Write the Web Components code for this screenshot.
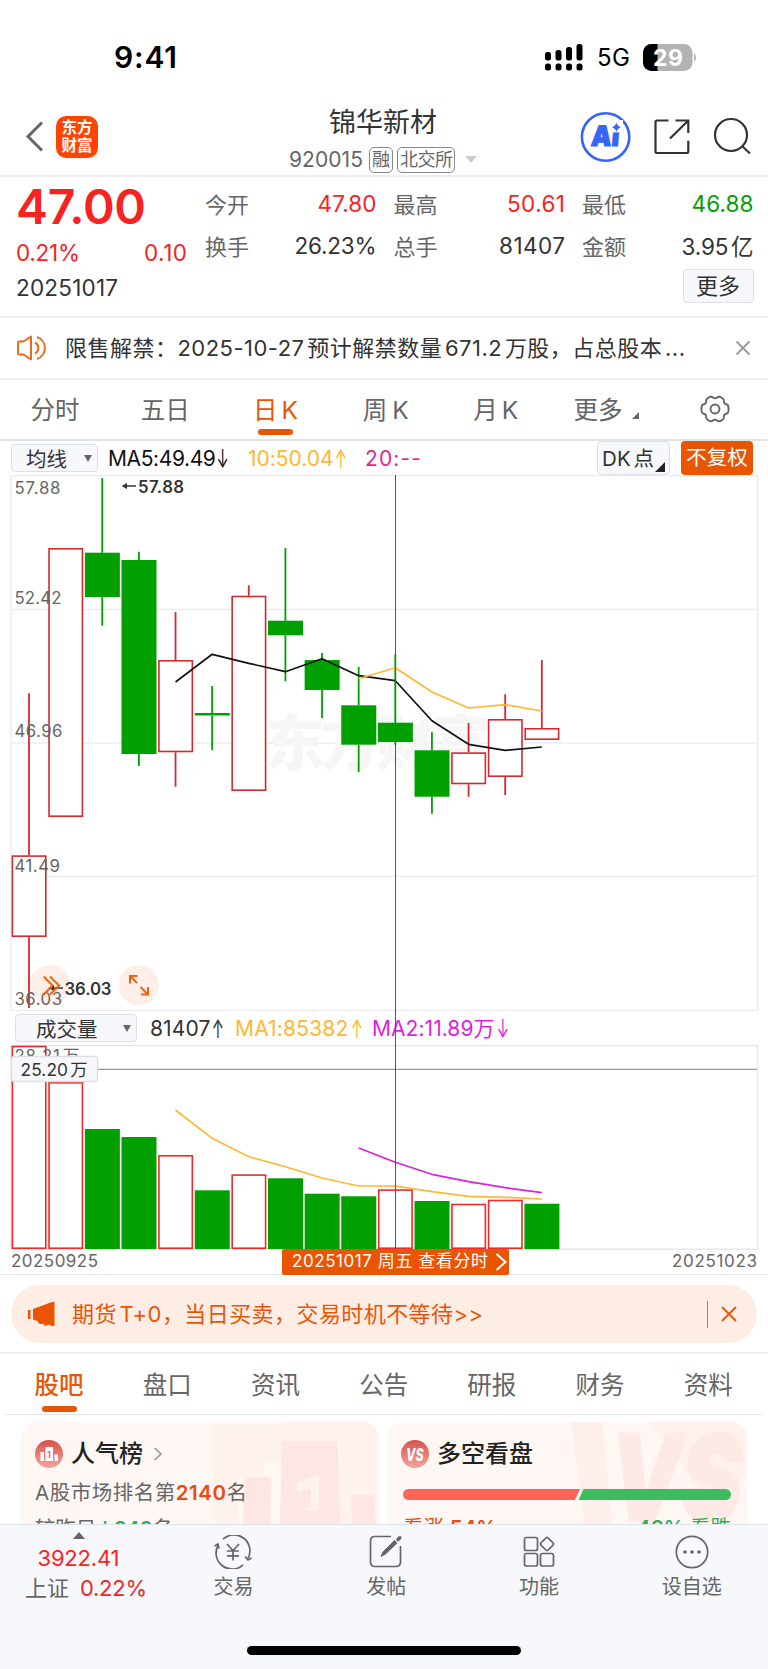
<!DOCTYPE html>
<html lang="zh-CN">
<head>
<meta charset="utf-8">
<title>锦华新材 920015</title>
<style>
  body {
    margin: 0;
    background: #fff;
    color: #333;
    font-family: Inter, "Noto Sans CJK SC", sans-serif;
    text-autospace: normal;
    width: 768px;
    height: 1669px;
    overflow: hidden;
  }
  stock-app { height: 1669px; }
</style>
</head>
<body>
<stock-app></stock-app>

<script>
const RED = '#f72323';
const GREEN = '#00a000';

// small helper so every component gets its own open shadow root
class BaseElement extends HTMLElement {
  connectedCallback() {
    if (this.shadowRoot) return;
    this.attachShadow({ mode: 'open' });
    this.shadowRoot.innerHTML = `<style>* { box-sizing: border-box; } ${this.css()}</style>${this.html()}`;
    this.ready();
  }
  css() { return ''; }
  html() { return '<slot></slot>'; }
  ready() {}
}

class StatusBar extends BaseElement {
  css() {
    return `
      :host { display: flex; align-items: center; height: 100px; padding: 14px 71px 0 114px; color: #000; }
      .time { font-size: 30px; font-weight: 600; flex: 1; }
      .net { font-size: 24px; margin: 1px 13px 0 13px; }
      svg { display: block; }
    `;
  }
  html() {
    return `
      <span class="time"><fit-text w="63">9:41</fit-text></span>
      <svg width="39" height="27" viewBox="0 0 39 27">
        <rect x="0" y="8" width="6" height="8.5" rx="2.5"/><rect x="10.5" y="6" width="6" height="10.5" rx="2.5"/>
        <rect x="21" y="3" width="6" height="13.5" rx="2.5"/><rect x="31.5" y="0" width="6" height="16.5" rx="2.5"/>
        <rect x="0" y="19.5" width="6" height="7" rx="2.5"/><rect x="10.5" y="19.5" width="6" height="7" rx="2.5"/>
        <rect x="21" y="19.5" width="6" height="7" rx="2.5"/><rect x="31.5" y="19.5" width="6" height="7" rx="2.5"/>
      </svg>
      <span class="net"><fit-text w="33">5G</fit-text></span>
      <svg width="54" height="27" viewBox="0 0 54 27">
        <clipPath id="b"><rect width="49.5" height="27" rx="8.5"/></clipPath>
        <g clip-path="url(#b)"><rect width="50" height="27" fill="#b3b3b3"/><rect width="14.5" height="27"/></g>
        <path d="M51 9.5c2.6 .6 2.6 7.4 0 8z" fill="#b3b3b3"/>
        <text x="10" y="21.8" font-size="23" font-weight="700" fill="#fff" textLength="30">29</text>
      </svg>
    `;
  }
}

class StockHeader extends BaseElement {
  css() {
    return `
      :host { display: grid; grid-template-columns: 270px 1fr 188px; height: 77px; border-bottom: 2px solid #efeff0; }
      .left { display: flex; align-items: center; padding: 0 0 2px 25px; gap: 12px; }
      .logo {
        display: flex; flex-direction: column; align-items: center; justify-content: center;
        width: 42px; height: 42px; border-radius: 10px; background: #ff4400; color: #fff;
        font-weight: 700; font-size: 15.5px; line-height: 17.5px;
      }
      .mid { display: flex; flex-direction: column; padding-left: 19px; }
      .name { font-size: 27px; line-height: 36px; margin: 5px 0 0 40px; }
      .code { display: flex; align-items: center; gap: 4px; font-size: 21px; color: #666; height: 27px; margin-top: 5px; }
      .badge { border: 1.5px solid #888; border-radius: 5px; height: 26px; padding: 0 2px; font-size: 18px; line-height: 23px; }
      .code > fit-text { margin-right: 2px; }
      .badge fit-text { margin-right: -1px; }
      .down { border: 6px solid transparent; border-top: 7px solid #ccc; border-bottom: 0; margin-left: 6px; }
      .right { display: flex; align-items: flex-start; }
      svg { display: block; }
    `;
  }
  html() {
    return `
      <div class="left">
        <svg width="19" height="31" viewBox="0 0 19 31"><path d="M17 1.5L3 15.5L17 29.5" fill="none" stroke="#666" stroke-width="3"/></svg>
        <div class="logo"><span>东方</span><span>财富</span></div>
      </div>
      <div class="mid">
        <div class="name">锦华新材</div>
        <div class="code"><fit-text w="74">920015</fit-text><span class="badge">融</span><span class="badge"><fit-text w="53">北交所</fit-text></span><i class="down"></i></div>
      </div>
      <div class="right">
        <svg width="188" height="75" viewBox="580 100 188 75">
          <circle cx="605.600" cy="137" r="23.700" fill="none" stroke="#3564fb" stroke-width="2.600"/>
          <text transform="translate(590.500 146) skewX(-5)" font-size="28" font-weight="900" fill="#3564fb" stroke="#3564fb" stroke-width="1.200" stroke-linejoin="round" textLength="28" lengthAdjust="spacingAndGlyphs">Ai</text>
          <path d="M609.500 120H623V132.400H609.500Z" fill="#fff"/>
          <path d="M616.400 122.500q1 3.700 4.500 4.800q-3.500 1.100 -4.500 4.800q-1 -3.700 -4.500 -4.800q3.500 -1.100 4.500 -4.800z" fill="#3564fb"/>
          <g fill="none" stroke="#333" stroke-width="2.200">
            <path d="M668.500 120.500H657Q655.500 120.500 655.500 122V151.500Q655.500 153 657 153H686.500Q688.300 153 688.300 151.500V140.700"/>
            <path d="M675.500 120.500H688.300V133M688.300 120.500L670 138.500"/>
            <circle cx="731" cy="135" r="16"/>
            <path d="M742 146L750 153.500"/>
          </g>
        </svg>
      </div>
    `;
  }
}

class QuotePanel extends BaseElement {
  css() {
    return `
      :host { display: grid; grid-template-columns: 171px 1fr; column-gap: 18px; height: 141px; padding: 0 15px 0 16px; border-bottom: 2px solid #efeff0; font-size: 22.5px; }
      .price { font-size: 48px; font-weight: 600; line-height: 58px; height: 61px; color: ${RED}; padding-top: 1px; }
      .change { display: flex; justify-content: space-between; height: 30px; line-height: 30px; color: ${RED}; }
      .date { line-height: 30px; margin-top: 5px; }
      .grid { display: grid; grid-template-columns: repeat(3, 171.5px); column-gap: 17px; grid-auto-rows: 42px; padding-top: 5px; }
      .cell { display: flex; justify-content: space-between; align-items: center; }
      .cell i { font-style: normal; font-size: 22px; color: #666; }
      .up { color: ${RED}; }
      .down { color: ${GREEN}; }
      .more { display: flex; justify-content: flex-end; margin-top: 3px; }
      .more span { width: 71px; height: 34px; border: 1.5px solid #dcdfe6; border-radius: 4px; background: #f7f8fb; text-align: center; line-height: 32px; font-size: 22px; }
    `;
  }
  html() {
    const cells = [
      ['今开', '47.80', 59, 'up'], ['最高', '50.61', 58, 'up'], ['最低', '46.88', 62, 'down'],
      ['换手', '26.23%', 82, ''], ['总手', '81407', 66, ''], ['金额', '3.95亿', 72, '']
    ];
    return `
      <div>
        <div class="price"><fit-text w="130">47.00</fit-text></div>
        <div class="change"><fit-text w="64">0.21%</fit-text><fit-text w="43">0.10</fit-text></div>
        <div class="date"><fit-text w="102">20251017</fit-text></div>
      </div>
      <div>
        <div class="grid">
          ${cells.map(c => `<div class="cell"><i>${c[0]}</i><fit-text w="${c[2]}" class="${c[3]}">${c[1]}</fit-text></div>`).join('')}
        </div>
        <div class="more"><span>更多</span></div>
      </div>
    `;
  }
}

class NoticeBar extends BaseElement {
  css() {
    return `
      :host { display: flex; align-items: center; height: 62px; padding: 0 17px 0 16px; border-bottom: 2px solid #efeff0; font-size: 22px; }
      fit-text { margin: -5px 0 0 17px; }
      .close { margin-left: auto; }
    `;
  }
  html() {
    return `
      <svg width="32" height="26" viewBox="0 0 32 26" fill="none" stroke="#ee6a1d" stroke-width="2" stroke-linejoin="round">
        <path d="M15 1.500L7.500 6.500H3.500Q2 6.500 2 8V18Q2 19.500 3.500 19.500H7.500L15 24.500Z"/>
        <path d="M19 7.500A6.200 6.200 0 0 1 19 18.500M21 2A11.600 11.600 0 0 1 21 24"/>
      </svg>
      <fit-text w="620">限售解禁：2025-10-27预计解禁数量671.2万股，占总股本...</fit-text>
      <svg class="close" width="16" height="16" viewBox="0 0 16 16"><path d="M1.500 1.500L14.500 14.500M14.500 1.500L1.500 14.500" stroke="#999" stroke-width="1.800"/></svg>
    `;
  }
}

class PeriodTabs extends BaseElement {
  css() {
    return `
      :host { display: grid; grid-template-columns: repeat(6, 110.2px) 1fr; height: 61px; border-bottom: 2px solid #e2e3e8; font-size: 24.5px; color: #666; }
      .tab { display: grid; grid-template-rows: 1fr 10px; justify-items: center; align-items: center; }
      .tab span { padding-top: 7px; white-space: nowrap; }
      .tab svg { display: block; margin-top: 2px; }
      .on { color: #ea5504; }
      .on i { width: 35px; height: 6px; border-radius: 3px; background: #ea5504; margin-bottom: 5px; }
      .tri { display: inline-block; border-left: 7px solid transparent; border-bottom: 7px solid #666; margin-left: 9px; }
    `;
  }
  html() {
    return `
      <div class="tab"><span>分时</span></div>
      <div class="tab"><span>五日</span></div>
      <div class="tab on"><span><fit-text w="45">日K</fit-text></span><i></i></div>
      <div class="tab"><span><fit-text w="46">周K</fit-text></span></div>
      <div class="tab"><span><fit-text w="45">月K</fit-text></span></div>
      <div class="tab"><span>更多<b class="tri"></b></span></div>
      <div class="tab"><span>
        <svg width="30" height="28" viewBox="-15 -14 30 28" fill="none" stroke="#666" stroke-width="1.900" stroke-linejoin="round">
          <path d="M-5.500 -12Q-3 -12.800 -2.200 -11.500Q0 -9.800 2.200 -11.500Q3 -12.800 5.500 -12L8 -10.300Q9.300 -9.300 8.800 -7.500Q9 -4.800 12 -4.500Q13.500 -4 13.600 0Q13.500 4 12 4.500Q9 4.800 8.800 7.500Q9.300 9.300 8 10.300L5.500 12Q3 12.800 2.200 11.500Q0 9.800 -2.200 11.500Q-3 12.800 -5.500 12L-8 10.300Q-9.300 9.300 -8.800 7.500Q-9 4.800 -12 4.500Q-13.500 4 -13.600 0Q-13.500 -4 -12 -4.500Q-9 -4.800 -8.800 -7.500Q-9.300 -9.300 -8 -10.300Z"/>
          <circle r="4.500"/>
        </svg></span></div>
    `;
  }
}

class SelectBox extends BaseElement {
  css() {
    return `
      :host { display: flex; align-items: center; justify-content: space-between; box-sizing: border-box; height: 28px; border: 1.5px solid #dddfe6; border-radius: 4px; background: #f7f8fb; font-size: 20.5px; line-height: 24px; color: #333; }
      span { padding-top: 3px; }
      i { border: 4px solid transparent; border-top: 7px solid #666; border-bottom: 0; margin-right: 5px; }
    `;
  }
  html() { return '<span><slot></slot></span><i></i>'; }
}

class IndicatorRow extends BaseElement {
  css() {
    return `
      :host { display: flex; align-items: center; box-sizing: border-box; font-size: 21px; line-height: 30px; }
      ::slotted(*) { flex: none; }
    `;
  }
}

// candles: [high, bodyTop, bodyBottom, low, rising], page y coordinates
const CANDLES = [
  [693.3, 855.3, 937, 1008, 1], [548, 548, 817, 817, 1], [478, 552.7, 597, 625.7, 0],
  [551.7, 560, 754, 766, 0], [612, 660, 752.3, 786.7, 1], [686, 713, 715.5, 750, 0],
  [585.3, 595.7, 791, 791, 1], [548, 620.7, 635.3, 681.3, 0], [653, 660, 690, 718, 0],
  [667, 705.3, 744.7, 772, 0], [654.3, 722.7, 742, 744.7, 0], [732.3, 750.3, 796.7, 813.7, 0],
  [723, 752.3, 784.3, 796.7, 1], [694.3, 719, 777, 795, 1], [660, 728, 740, 740, 1]
];
const VOLUMES = [1045.7, 1082, 1129, 1137, 1155, 1190.3, 1174.3, 1178.3, 1193.7, 1196.3, 1189.3, 1201, 1203.7, 1199.7, 1203.7];
const VOLUME_UP = [1, 1, 0, 0, 1, 0, 1, 0, 0, 0, 1, 0, 1, 1, 0];

const barX = i => 29 + 36.63 * i;
const line = (start, ys, color) =>
  `<polyline points="${ys.map((y, i) => `${barX(start + i)},${y}`).join(' ')}" fill="none" stroke="${color}" stroke-width="1.700" stroke-linejoin="round"/>`;
const bar = (i, top, bottom, up, red) => up
  ? `<rect x="${barX(i) - 16.6}" y="${top + 0.8}" width="33.4" height="${bottom - top - 1.6}" fill="#fff" stroke="${red}" stroke-width="1.600"/>`
  : `<rect x="${barX(i) - 17.4}" y="${top}" width="35" height="${bottom - top}" fill="${GREEN}"/>`;

class KlineChart extends BaseElement {
  css() { return ':host { display: block; height: 536px; } svg { display: block; }'; }
  html() {
    const red = '#d42a2e';
    const labels = [['57.88', 494, 46], ['52.42', 603.5, 47], ['46.96', 737, 48], ['41.49', 871.5, 45.5], ['36.03', 1004.8, 47.5]];
    return `
      <svg width="768" height="536" viewBox="0 475 768 536">
        <g stroke="#e9edf2" stroke-width="1.500" fill="none">
          <rect x="11" y="475.600" width="746.500" height="535"/>
          <path d="M11 609.500H757M11 743H757M11 876.300H757"/>
        </g>
        <text x="265" y="765" font-size="60" font-weight="900" fill="#f6f6f6" textLength="226">东方财富</text>
        ${CANDLES.map((c, i) => `
          <path d="M${barX(i)} ${c[0]}V${c[1]}M${barX(i)} ${c[2]}V${c[3]}" stroke="${c[4] ? red : GREEN}" stroke-width="1.800"/>
          ${bar(i, c[1], c[2], c[4], red)}`).join('')}
        ${line(4, [682, 654.3, 663.3, 671.7, 658.7, 675.7, 680.7, 720.7, 744.3, 750.3, 747], '#111')}
        ${line(9, [678.7, 667.7, 692, 708, 704.7, 711], '#ffb733')}
        <g fill="#fdece3" fill-opacity=".85"><circle cx="50" cy="985" r="20"/><circle cx="138.700" cy="985" r="20"/></g>
        <g font-size="16.800" fill="#666">
          ${labels.map(l => `<text x="14.500" y="${l[1]}" textLength="${l[2]}">${l[0]}</text>`).join('')}
        </g>
        <g font-size="16.800" font-weight="600" fill="#333" stroke="none">
          <text x="138" y="492.500" textLength="46">57.88</text>
          <text x="64.500" y="994.500" textLength="47">36.03</text>
        </g>
        <g stroke="#333" stroke-width="1.600" fill="#333">
          <path d="M124 486H136M52 988H63"/>
          <path d="M127 483L121.500 486L127 489ZM54 985L48.500 988L54 991Z" stroke="none"/>
        </g>
        <g stroke="#ee6417" stroke-width="2" fill="none">
          <path d="M43.700 976.500L52.500 985.500L43.700 994.500M50 976.500L59 985.500L50 994.500"/>
          <path d="M137.500 976H130V983.500M130 976L137 983M141 994.500H148V987M148 994.500L140.500 987"/>
        </g>
      </svg>
    `;
  }
}

class VolumeChart extends BaseElement {
  css() { return ':host { display: block; height: 205px; } svg { display: block; }'; }
  html() {
    return `
      <svg width="768" height="205" viewBox="0 1045 768 205">
        <rect x="11" y="1045.600" width="746.500" height="203.600" fill="none" stroke="#e4e5ea" stroke-width="1.300"/>
        ${VOLUMES.map((y, i) => bar(i, y, 1249, VOLUME_UP[i], '#f02a2a')).join('')}
        ${line(4, [1110, 1138.3, 1156.7, 1166.7, 1178, 1186, 1186, 1191.7, 1196.3, 1197.3, 1199], '#ffb733')}
        ${line(9, [1148, 1162.3, 1174.3, 1181.7, 1187.7, 1192.7], '#de1fe0')}
        <path d="M97 1069.300H757" stroke="#999" stroke-width="1.200"/>
        <text x="14.500" y="1061.500" font-size="16.800" fill="#666" textLength="65">28.21万</text>
        <rect x="11.500" y="1056.500" width="86" height="25" rx="3" fill="#f7f8fb" stroke="#dddfe6" stroke-width="1.300"/>
        <text x="20.500" y="1075.800" font-size="17.300" fill="#333" textLength="67">25.20万</text>
      </svg>
    `;
  }
}

class ChartPanel extends BaseElement {
  css() {
    return `
      :host { display: block; position: relative; height: 834px; border-bottom: 1.5px solid #e2e4ea; }
      .ma { height: 34px; padding: 0 15px 0 11px; }
      .ma select-box { width: 87px; padding-left: 14px; margin-right: 10px; }
      .vol { height: 34px; padding-left: 15px; }
      .vol select-box { width: 122px; padding-left: 20px; margin-right: 13px; }
      .ma > fit-text, .vol > fit-text { padding-top: 2px; }
      .yellow { color: #ffb733; }
      u { display: inline-block; text-decoration: none; transform: scale(.7, 1.25); margin: 0 -3px 0 -1px; }
      .tool { height: 34px; border-radius: 4px; font-size: 20.5px; line-height: 34px; }
      .dk { display: flex; align-items: flex-end; width: 73px; margin-left: auto; border: 1.5px solid #dddfe6; background: #f7f8fb; padding-left: 4px; line-height: 31px; }
      .dk i { border-left: 10px solid transparent; border-bottom: 10px solid #222; margin-bottom: 2px; margin-left: 1px; }
      .adj { width: 72px; margin-left: 11px; background: #ea5504; color: #fff; text-align: center; }
      .cross { position: absolute; left: 395px; top: 34px; width: 1.3px; height: 774px; background: #555; }
      .dates { display: flex; justify-content: space-between; height: 24.500px; padding: 0 11px; font-size: 17px; line-height: 22px; color: #666; }
      .chip { display: flex; align-items: center; width: 227px; margin-left: 21px; padding: 0 2px 0 10px; gap: 7px; border-radius: 2px; background: #ea5504; color: #fff; margin-top: -1px; line-height: 27px; }
    `;
  }
  html() {
    return `
      <indicator-row class="ma">
        <select-box>均线</select-box>
        <fit-text w="121" style="color:#111">MA5:49.49<u>↓</u></fit-text>
        <fit-text w="99" class="yellow" style="margin-left:19px">10:50.04<u>↑</u></fit-text>
        <fit-text w="56" style="margin-left:18px;color:#ea1f98">20:--</fit-text>
        <span class="tool dk"><fit-text w="52">DK点</fit-text><i></i></span>
        <span class="tool adj">不复权</span>
      </indicator-row>
      <kline-chart></kline-chart>
      <indicator-row class="vol">
        <select-box>成交量</select-box>
        <fit-text w="74">81407<u>↑</u></fit-text>
        <fit-text w="127" class="yellow" style="margin-left:11px">MA1:85382<u>↑</u></fit-text>
        <fit-text w="136" style="margin-left:10px;color:#de1fe0;text-autospace:no-autospace">MA2:11.89万<u>↓</u></fit-text>
      </indicator-row>
      <volume-chart></volume-chart>
      <div class="dates">
        <fit-text w="87">20250925</fit-text>
        <span class="chip"><fit-text w="196">20251017 周五 查看分时</fit-text>
          <svg width="12" height="20" viewBox="0 0 12 20"><path d="M1.500 2L10.500 10L1.500 18" fill="none" stroke="#fff" stroke-width="2"/></svg></span>
        <fit-text w="85">20251023</fit-text>
      </div>
      <div class="cross"></div>
    `;
  }
}

class PromoBanner extends BaseElement {
  css() {
    return `
      :host { display: block; height: 79px; padding: 10px 11px 0; border-bottom: 2px solid #efeff0; box-sizing: border-box; }
      .pill { display: flex; align-items: center; height: 58px; padding: 0 20px 0 16px; border-radius: 29px; background: #feede5; color: #ea5504; font-size: 22px; }
      fit-text { margin: -5px 0 0 16px; }
      .bar { width: 1.500px; height: 27px; background: #ee6a2a; margin: 0 13px 0 auto; }
    `;
  }
  html() {
    return `
      <div class="pill">
        <svg width="29" height="26" viewBox="0 0 29 26" fill="#ea5504">
          <rect x="1" y="9" width="2.500" height="9"/>
          <path d="M6 8L25 1H27.500V25H25L21 23.500Q19.500 25.500 17.500 24.500L16 22.500Q14 23.500 12 22.500L10.500 20L6 18.500Z"/>
        </svg>
        <fit-text w="411">期货T+0，当日买卖，交易时机不等待&gt;&gt;</fit-text>
        <span class="bar"></span>
        <svg width="16" height="16" viewBox="0 0 16 16"><path d="M1 1L15 15M15 1L1 15" stroke="#ea5504" stroke-width="1.800"/></svg>
      </div>
    `;
  }
}

class InfoTabs extends BaseElement {
  css() {
    return `
      :host { display: grid; grid-template-columns: repeat(7, 108.2px); height: 61px; margin: 0 6px 0 5px; border-bottom: 1.5px solid #e6e6ec; box-sizing: border-box; font-size: 24.5px; color: #666; }
      .tab { display: grid; grid-template-rows: 52px 6px; justify-items: center; line-height: 62px; }
      .on { color: #ea5504; font-weight: 500; }
      .on i { width: 35px; height: 6px; border-radius: 3px; background: #ea5504; }
    `;
  }
  html() {
    return ['股吧', '盘口', '资讯', '公告', '研报', '财务', '资料']
      .map((t, i) => `<div class="tab ${i === 0 ? 'on' : ''}"><span>${t}</span><i></i></div>`).join('');
  }
}

class InfoCards extends BaseElement {
  css() {
    return `
      :host { display: grid; grid-template-columns: 359px 360px; gap: 7px; height: 109px; padding: 7px 21px 0; overflow: hidden; box-sizing: border-box; }
      .card { position: relative; height: 140px; border-radius: 16px; background: #fff7f4; padding: 16px 16px 0 14px; overflow: hidden; }
      .art { position: absolute; left: 0; top: 0; }
      .body { position: relative; }
      h3 { display: flex; align-items: center; gap: 8px; margin: 0; font-size: 24px; font-weight: 500; line-height: 32px; color: #222; }
      p { margin: 4px 0 0; font-size: 20.5px; line-height: 38px; color: #666; text-autospace: no-autospace; }
      p + p { line-height: 32px; margin-top: 1px; }
      b { color: #ea4a14; font-weight: 600; }
      em { font-style: normal; font-weight: 600; color: #2fae59; }
      .rate { display: block; margin: 19px 0 0 2px; }
      .legend { display: flex; justify-content: space-between; font-size: 20.5px; line-height: 30px; margin: 13px 0 0 2px; }
    `;
  }
  html() {
    const grad = id => `<linearGradient id="${id}" x1="0" y1="0" x2="0" y2="1"><stop offset="0" stop-color="#d9514c"/><stop offset="1" stop-color="#f3a59e"/></linearGradient>`;
    return `
      <div class="card">
        <svg class="art" width="359" height="140" viewBox="21 1422 359 140">
          <path d="M214 1424H286V1462H238V1562H214Z" fill="#fef2ef"/><path d="M286 1422H376V1562H340V1442H264V1477H238V1462L262 1460Z" fill="#fef1ee"/>
          <path d="M282 1441H338L341 1562H279ZM245 1477H271L269 1562H241ZM351 1495H374L378 1562H353Z" fill="#fde6e3"/>
          <path d="M297 1483L319 1475V1510H305V1508H311V1488L297 1492Z" fill="#fff3f0"/>
        </svg>
        <div class="body">
          <h3>
            <svg width="28" height="28" viewBox="0 0 28 28">${grad('g1')}<circle cx="14" cy="14" r="14" fill="url(#g1)"/>
              <path d="M5.500 12H9V21H5.500ZM10.500 7H18V21H10.500ZM19.500 14.500H23V21H19.500Z" fill="#fff"/><text x="12" y="17.500" font-size="9" font-weight="700" fill="#e0706a">1</text></svg>
            <span>人气榜</span>
            <svg width="10" height="16" viewBox="0 0 10 16" style="margin-left:2px"><path d="M1.500 2L8 8L1.500 14" fill="none" stroke="#999" stroke-width="1.700"/></svg>
          </h3>
          <p><fit-text w="212">A股市场排名第<b>2140</b>名</fit-text></p>
          <p><fit-text w="138">较昨日<em>↓242</em>名</fit-text></p>
        </div>
      </div>
      <div class="card">
        <svg class="art" width="360" height="140" viewBox="387 1422 360 140">
          <path d="M571 1422H602L616 1562H590Z" fill="#feefec"/><path d="M650 1422H747V1470Q735 1500 700 1490Z" fill="#fef1ee"/>
          <text x="610" y="1520" font-size="118" font-weight="900" font-style="italic" fill="#fde9e6" stroke="#fde9e6" stroke-width="3" textLength="132" lengthAdjust="spacingAndGlyphs">VS</text>
        </svg>
        <div class="body">
          <h3>
            <svg width="28" height="28" viewBox="0 0 28 28">${grad('g2')}<circle cx="14" cy="14" r="14" fill="url(#g2)"/>
              <text x="5" y="20.500" font-size="17.500" font-weight="800" font-style="italic" fill="#fff" textLength="17.500" lengthAdjust="spacingAndGlyphs">VS</text></svg>
            <span>多空看盘</span>
          </h3>
          <svg class="rate" width="328" height="11" viewBox="0 0 328 11">
            <path d="M5.500 0H177L172 11H5.500A5.500 5.500 0 0 1 5.500 0Z" fill="#ff6557"/><path d="M180.500 0H322.500A5.500 5.500 0 0 1 322.500 11H175.500Z" fill="#3cbc5e"/>
          </svg>
          <div class="legend"><span style="color:#ea4a14">看涨 <b>54%</b></span><span style="color:#2fae59"><em>46%</em> 看跌</span></div>
        </div>
      </div>
    `;
  }
}

class BottomBar extends BaseElement {
  css() {
    return `
      :host { display: grid; grid-template-columns: 157px repeat(4, 152.800px); grid-template-rows: 121px 9px; height: 145px; border-top: 1.5px solid #dde3ea; background: #f7f8fb; box-sizing: border-box; overflow: hidden; }
      .index { display: flex; flex-direction: column; align-items: center; font-size: 22px; color: ${RED}; padding-top: 7px; }
      .index i { border: 6px solid transparent; border-bottom: 7px solid #666; border-top: 0; }
      .index div { line-height: 30px; }
      .index .num { margin-top: 4px; }
      .index .sub { color: #666; align-self: flex-start; padding-left: 25px; }
      .item { display: flex; flex-direction: column; align-items: center; gap: 3px; padding-top: 10px; font-size: 20px; line-height: 30px; color: #666; }
      .home { grid-column: 1 / -1; justify-self: center; width: 274px; height: 9px; border-radius: 5px; background: #000; margin-right: 1px; }
      svg { display: block; fill: none; stroke: #666; stroke-width: 1.700; }
    `;
  }
  html() {
    return `
      <div class="index">
        <i></i>
        <div class="num"><fit-text w="82">3922.41</fit-text></div>
        <div class="sub"><fit-text w="44">上证</fit-text><fit-text w="67" style="color:${RED};margin-left:11px">0.22%</fit-text></div>
      </div>
      <div class="item">
        <svg width="40" height="34" viewBox="-20 -17 40 34">
          <path d="M-10 -12.800A16 16 0 0 1 15 6.500M12 4.500L15 8L18.500 6"/><path d="M10 12.800A16 16 0 0 1 -15 -6.500M-18.500 -6L-15 -8L-14 -3.500"/>
          <path d="M-6 -8L0 -1.500L6 -8M0 -1.500V8.500M-6 -1H6M-6 3.800H6"/>
        </svg><span>交易</span>
      </div>
      <div class="item">
        <svg width="34" height="34" viewBox="0 0 34 34">
          <path d="M22 1.500H6Q1.500 1.500 1.500 6V27Q1.500 31.500 6 31.500H27Q31.500 31.500 31.500 27V11"/>
          <path d="M12 21.500L14 17L25.500 5.500L28 8L16.500 19Z" fill="#666" stroke-width="1"/><path d="M29 4.500L30.800 2.800" stroke-width="3.600" stroke-linecap="round"/>
        </svg><span>发帖</span>
      </div>
      <div class="item">
        <svg width="32" height="34" viewBox="0 0 32 34">
          <rect x="1.500" y="2.500" width="13" height="13" rx="2"/><rect x="1.500" y="18.500" width="13" height="12.500" rx="2"/><rect x="17.500" y="18.500" width="13" height="12.500" rx="2"/>
          <rect x="-5" y="-5" width="10" height="10" rx="1.500" transform="translate(24 9) rotate(45)"/>
        </svg><span>功能</span>
      </div>
      <div class="item">
        <svg width="34" height="34" viewBox="0 0 34 34">
          <circle cx="17" cy="17" r="15.700"/><g fill="#666" stroke="none"><circle cx="10" cy="17" r="1.800"/><circle cx="17" cy="17" r="1.800"/><circle cx="24" cy="17" r="1.800"/></g>
        </svg><span>设自选</span>
      </div>
      <div class="home"></div>
    `;
  }
}

class StockApp extends BaseElement {
  css() { return ':host { display: block; }'; }
  html() {
    return `
      <status-bar></status-bar>
      <stock-header></stock-header>
      <quote-panel></quote-panel>
      <notice-bar></notice-bar>
      <period-tabs></period-tabs>
      <chart-panel></chart-panel>
      <promo-banner></promo-banner>
      <info-tabs></info-tabs>
      <info-cards></info-cards>
      <bottom-bar></bottom-bar>
    `;
  }
  ready() {
    // hosts that set a height count their border in it
    this.shadowRoot.querySelectorAll('*').forEach(el => { el.style.boxSizing = 'border-box'; });
  }
}

// tracks its text so that the run takes the width given in "w"
class FitText extends BaseElement {
  css() { return ':host { display: inline-block; flex: none; white-space: nowrap; } span { display: inline-block; }'; }
  html() { return '<span><slot></slot></span>'; }
  ready() {
    const run = this.shadowRoot.querySelector('span');
    const w = parseFloat(this.getAttribute('w'));
    const natural = this.getBoundingClientRect().width;
    const spacing = (w - natural) / ([...this.textContent].length - 1);
    run.style.letterSpacing = `${spacing}px`;
    run.style.marginRight = `${-spacing}px`;
  }
}

customElements.define('stock-app', StockApp);
customElements.define('status-bar', StatusBar);
customElements.define('stock-header', StockHeader);
customElements.define('quote-panel', QuotePanel);
customElements.define('notice-bar', NoticeBar);
customElements.define('period-tabs', PeriodTabs);
customElements.define('select-box', SelectBox);
customElements.define('indicator-row', IndicatorRow);
customElements.define('kline-chart', KlineChart);
customElements.define('volume-chart', VolumeChart);
customElements.define('chart-panel', ChartPanel);
customElements.define('promo-banner', PromoBanner);
customElements.define('info-tabs', InfoTabs);
customElements.define('info-cards', InfoCards);
customElements.define('bottom-bar', BottomBar);
customElements.define('fit-text', FitText);
</script>
</body>
</html>
